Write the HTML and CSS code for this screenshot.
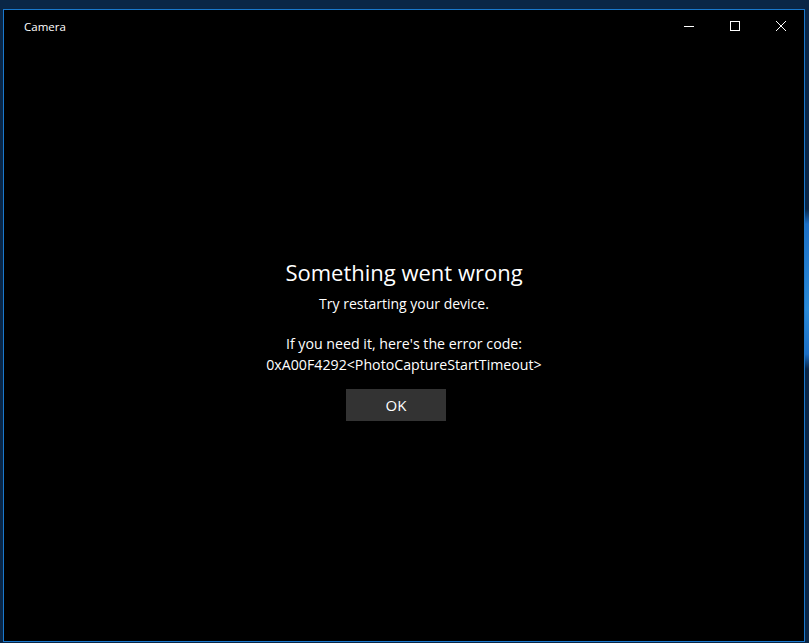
FILE: index.html
```html
<!DOCTYPE html>
<html>
<head>
<meta charset="utf-8">
<link rel="stylesheet" href="styles.css">
</head>
<body>
<div class="desktop">
  <div class="window">
    <div class="titlebar">
      <div class="title">Camera</div>
      <div class="controls">
        <div class="ctl">
          <svg width="10" height="10" viewBox="0 0 10 10"><path d="M0 5.5H10" stroke="#fff" stroke-width="1"/></svg>
        </div>
        <div class="ctl">
          <svg width="10" height="10" viewBox="0 0 10 10"><rect x="0.5" y="0.5" width="9" height="9" fill="none" stroke="#fff" stroke-width="1"/></svg>
        </div>
        <div class="ctl">
          <svg width="10" height="10" viewBox="0 0 10 10"><path d="M0 0L10 10M10 0L0 10" stroke="#fff" stroke-width="1"/></svg>
        </div>
      </div>
    </div>
    <div class="content">
      <div class="message">
        <h1 class="heading">Something went wrong</h1>
        <p class="sub">Try restarting your device.</p>
        <p class="code">If you need it, here's the error code:<br>0xA00F4292&lt;PhotoCaptureStartTimeout&gt;</p>
        <button class="ok">OK</button>
      </div>
    </div>
  </div>
  <div class="edge"></div>
</div>
</body>
</html>
```
FILE: styles.css
```css
html, body {
  margin: 0;
  padding: 0;
  height: 100%;
  background: #0a2646;
}
.desktop {
  height: 643px;
  width: 809px;
  box-sizing: border-box;
  padding: 9px 0 1px 3px;
  display: flex;
  background: #0a2646;
}
.window {
  width: 802px;
  height: 633px;
  box-sizing: border-box;
  border: 1px solid #1a78cc;
  background: #000;
  display: flex;
  flex-direction: column;
  font-family: "Open Sans", "Noto Sans", sans-serif;
  color: #fff;
}
.edge {
  flex: 1;
  background: linear-gradient(to bottom, #0a2646 0, #0a2646 200px, #1d6fc4 215px, #2a8ad6 300px, #1d6fc4 345px, #0a2646 360px, #0a2646 100%);
}
.titlebar {
  height: 31px;
  display: flex;
  align-items: center;
  justify-content: space-between;
}
.title {
  font-size: 11.5px;
  padding-left: 20px;
  padding-top: 1px;
}
.controls {
  display: flex;
  height: 31px;
}
.ctl {
  width: 46px;
  display: flex;
  align-items: center;
  justify-content: center;
}
.ctl svg {
  display: block;
  shape-rendering: crispEdges;
}
.content {
  flex: 1;
  display: flex;
  align-items: center;
  justify-content: center;
  padding-bottom: 4px;
}
.message {
  display: flex;
  flex-direction: column;
  align-items: center;
  text-align: center;
}
.heading {
  margin: 0;
  font-weight: 400;
  font-size: 22px;
  line-height: 30px;
}
.sub {
  margin: 7px 0 0;
  font-size: 14px;
  line-height: 20px;
}
.code {
  margin: 19px 0 0;
  font-size: 14.2px;
  line-height: 21px;
}
.ok {
  margin-top: 14px;
  margin-right: 16px;
  width: 100px;
  height: 32px;
  border: none;
  background: #333;
  color: #fff;
  font-family: "Open Sans", "Noto Sans", sans-serif;
  font-size: 15px;
  padding: 0;
}
```
